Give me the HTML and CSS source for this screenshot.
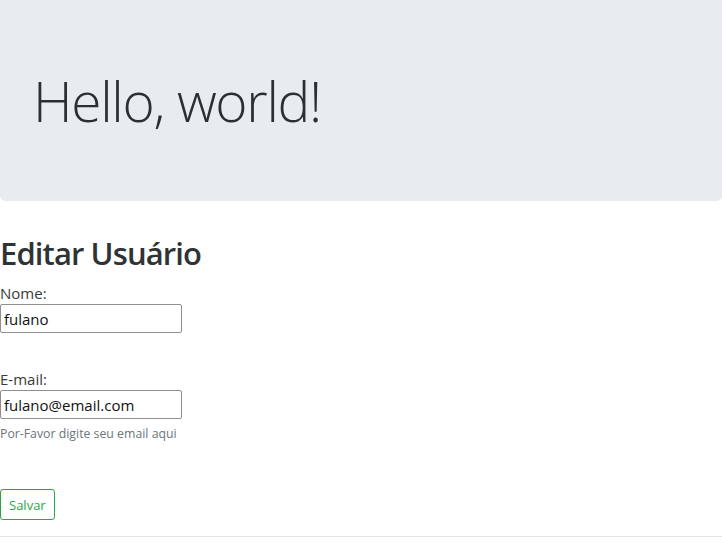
FILE: index.html
```html
<!DOCTYPE html>
<html lang="pt">
<head>
<meta charset="utf-8">
<title>Editar Usuário</title>
<link rel="stylesheet" href="styles.css">
</head>
<body>
<div class="jumbotron">
  <h1 class="display">Hello, world!</h1>
</div>
<main class="content">
  <h2 class="title">Editar Usuário</h2>
  <form class="form">
    <div class="group">
      <label class="label" for="nome">Nome:</label>
      <input class="field" id="nome" type="text" value="fulano">
    </div>
    <div class="group group-email">
      <label class="label" for="email">E-mail:</label>
      <input class="field" id="email" type="email" value="fulano@email.com">
      <small class="help">Por-Favor digite seu email aqui</small>
    </div>
    <button class="btn" type="button">Salvar</button>
  </form>
  <hr class="rule">
</main>
</body>
</html>
```

FILE: styles.css
```css
html, body {
  margin: 0;
  padding: 0;
  background: #fff;
}
body {
  font-family: "Open Sans", "Noto Sans", sans-serif;
  color: #212529;
  font-size: 16px;
  line-height: 1.5;
}
.jumbotron {
  background: #e9ecef;
  border-radius: 0 0 5px 5px;
  height: 201px;
  padding: 0 32px;
  display: flex;
  align-items: center;
  margin-bottom: 34px;
}
.display {
  margin: 0 0 0 1px;
  font-size: 55px;
  font-weight: 300;
  line-height: 1.2;
  letter-spacing: -1.3px;
  color: #2a2f33;
}
.title {
  margin: 0 0 10px;
  font-size: 31px;
  font-weight: 600;
  line-height: 1.2;
  letter-spacing: -0.9px;
  color: #2f3336;
}
.form {
  display: flex;
  flex-direction: column;
  align-items: flex-start;
}
.group {
  display: flex;
  flex-direction: column;
  align-items: flex-start;
}
.group-email {
  margin-top: 35px;
}
.label {
  font-size: 15px;
  line-height: 22px;
  color: #3a3a3a;
}
.field {
  box-sizing: border-box;
  width: 182px;
  height: 29px;
  margin: 0;
  padding: 1px 3px;
  border: 1px solid #8f8f8f;
  border-radius: 2px;
  font-family: inherit;
  font-size: 15px;
  color: #111;
}
.help {
  margin-top: 6px;
  font-size: 12.3px;
  line-height: 18px;
  color: #6c757d;
}
.btn {
  margin-top: 46px;
  box-sizing: border-box;
  height: 31px;
  padding: 0 8px;
  background: #fff;
  border: 1px solid #28a745;
  border-radius: 3px;
  color: #28a745;
  font-family: inherit;
  font-size: 13px;
}
.rule {
  margin: 16px 0 0;
  border: 0;
  border-top: 1px solid rgba(0,0,0,0.1);
}
```
